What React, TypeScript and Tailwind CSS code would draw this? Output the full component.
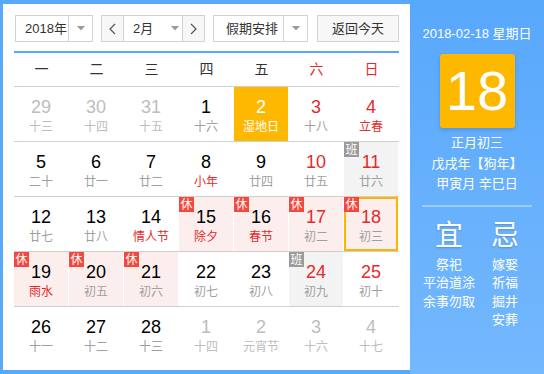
import React from "react";

type Cell = {
  d: number;
  l: string;
  other?: boolean;
  redNum?: boolean;
  redLunar?: boolean;
  badge?: "休" | "班";
  hl?: boolean;
  sel?: boolean;
};

const rows: Cell[][] = [
  [
    { d: 29, l: "十三", other: true },
    { d: 30, l: "十四", other: true },
    { d: 31, l: "十五", other: true },
    { d: 1, l: "十六" },
    { d: 2, l: "湿地日", hl: true },
    { d: 3, l: "十八", redNum: true },
    { d: 4, l: "立春", redNum: true, redLunar: true },
  ],
  [
    { d: 5, l: "二十" },
    { d: 6, l: "廿一" },
    { d: 7, l: "廿二" },
    { d: 8, l: "小年", redLunar: true },
    { d: 9, l: "廿四" },
    { d: 10, l: "廿五", redNum: true },
    { d: 11, l: "廿六", redNum: true, badge: "班" },
  ],
  [
    { d: 12, l: "廿七" },
    { d: 13, l: "廿八" },
    { d: 14, l: "情人节", redLunar: true },
    { d: 15, l: "除夕", redLunar: true, badge: "休" },
    { d: 16, l: "春节", redLunar: true, badge: "休" },
    { d: 17, l: "初二", redNum: true, badge: "休" },
    { d: 18, l: "初三", redNum: true, badge: "休", sel: true },
  ],
  [
    { d: 19, l: "雨水", redLunar: true, badge: "休" },
    { d: 20, l: "初五", badge: "休" },
    { d: 21, l: "初六", badge: "休" },
    { d: 22, l: "初七" },
    { d: 23, l: "初八" },
    { d: 24, l: "初九", redNum: true, badge: "班" },
    { d: 25, l: "初十", redNum: true },
  ],
  [
    { d: 26, l: "十一" },
    { d: 27, l: "十二" },
    { d: 28, l: "十三" },
    { d: 1, l: "十四", other: true },
    { d: 2, l: "元宵节", other: true },
    { d: 3, l: "十六", other: true },
    { d: 4, l: "十七", other: true },
  ],
];

const font = { fontFamily: '"Liberation Sans", Arial, "Noto Sans CJK SC", sans-serif' };

function Tri() {
  return (
    <svg width="8" height="5" viewBox="0 0 8 5">
      <path d="M0 0 L8 0 L4 4.5 Z" fill="#9a9a9a" />
    </svg>
  );
}

function Chev({ dir }: { dir: "l" | "r" }) {
  return (
    <svg width="7" height="12" viewBox="0 0 7 12">
      <path
        d={dir === "l" ? "M6 1 L1 6 L6 11" : "M1 1 L6 6 L1 11"}
        fill="none"
        stroke="#555"
        strokeWidth="1.2"
      />
    </svg>
  );
}

function DayCell({ c }: { c: Cell }) {
  let bg = "bg-white";
  if (c.hl) bg = "bg-[#ffb800]";
  else if (c.badge === "休") bg = "bg-[#fdeeee]";
  else if (c.badge === "班") bg = "bg-[#f3f3f3]";

  let numColor = "text-black";
  if (c.other) numColor = "text-[#bdbdbd]";
  else if (c.hl) numColor = "text-white";
  else if (c.redNum) numColor = "text-[#e22b2b]";

  let lunColor = "text-[#a0a0a0]";
  if (c.other) lunColor = "text-[#bdbdbd]";
  else if (c.hl) lunColor = "text-white";
  else if (c.redLunar) lunColor = "text-[#e22b2b]";

  return (
    <div className="w-[55px] h-[54px] pr-[1px]">
      <div
        className={`relative w-[54px] h-[54px] ${bg} ${
          c.sel ? "border-2 border-[#ffb400]" : ""
        } flex flex-col items-center`}
      >
        {c.badge && (
          <div
            className={`absolute ${c.sel ? "-left-[2px] -top-[2px]" : "left-0 top-0"} w-[15px] h-[15px] flex items-center justify-center text-[12px] leading-none text-white ${
              c.badge === "休" ? "bg-[#f5473e]" : "bg-[#9b9b9b]"
            }`}
          >
            {c.badge}
          </div>
        )}
        <div
          className={`${c.sel ? "mt-[8px]" : "mt-[10px]"} h-[20px] text-[18px] leading-[20px] ${numColor}`}
        >
          {c.d}
        </div>
        <div className={`mt-[2px] h-[16px] text-[12px] leading-[16px] ${lunColor}`}>{c.l}</div>
      </div>
    </div>
  );
}

export default function App() {
  const weekdays = ["一", "二", "三", "四", "五", "六", "日"];
  return (
    <div style={font} className="w-[544px] h-[374px] bg-[#58a8fc] pt-[4px] pb-[4px] pl-[3px] flex">
      <div className="w-[407px] h-[366px] bg-white pl-[11px] pt-[11px]">
        {/* toolbar */}
        <div className="flex items-center h-[27px] ml-[1px] text-[13px] text-[#333]">
          <div className="flex h-[27px] w-[78px] border border-[#d2d2d2] bg-white">
            <div className="flex-1 flex items-center pl-[9px]">2018年</div>
            <div className="w-[24px] border-l border-[#d2d2d2] flex items-center justify-center">
              <Tri />
            </div>
          </div>
          <div className="ml-[8px] flex h-[27px] w-[104px] border border-[#d2d2d2]">
            <div className="w-[22px] bg-[#f7f7f7] border-r border-[#d2d2d2] flex items-center justify-center">
              <Chev dir="l" />
            </div>
            <div className="flex-1 flex items-center pl-[9px] bg-white">
              <span>2月</span>
              <span className="ml-[18px]">
                <Tri />
              </span>
            </div>
            <div className="w-[22px] bg-[#f7f7f7] border-l border-[#d2d2d2] flex items-center justify-center">
              <Chev dir="r" />
            </div>
          </div>
          <div className="ml-[8px] flex h-[27px] w-[95px] border border-[#d2d2d2] bg-white">
            <div className="flex-1 flex items-center pl-[12px]">假期安排</div>
            <div className="w-[24px] border-l border-[#d2d2d2] flex items-center justify-center">
              <Tri />
            </div>
          </div>
          <div className="ml-[9px] h-[27px] w-[82px] border border-[#d2d2d2] bg-[#f7f7f7] flex items-center justify-center">
            返回今天
          </div>
        </div>
        <div className="mt-[9px] w-[385px] h-[2px] bg-[#58a8fc]" />
        {/* weekdays */}
        <div className="flex w-[385px] h-[33px] items-center text-[14px]">
          {weekdays.map((w, i) => (
            <div
              key={w}
              className={`w-[55px] text-center ${i >= 5 ? "text-[#e22b2b]" : "text-[#333]"}`}
            >
              {w}
            </div>
          ))}
        </div>
        {rows.map((r, ri) => (
          <div key={ri} className="flex w-[385px] border-t border-[#cfcfcf]">
            {r.map((c, ci) => (
              <DayCell key={ci} c={c} />
            ))}
          </div>
        ))}
      </div>
      {/* right panel */}
      <div className="flex-1 h-[370px] -mb-[4px] bg-gradient-to-b from-[#58a8fc] to-[#74b8fd] flex flex-col items-center text-white">
        <div className="mt-[21px] text-[13px] leading-[18px]">2018-02-18 星期日</div>
        <div className="mt-[11px] w-[75px] h-[74px] rounded-[3px] bg-[#ffb800] shadow-[0_2px_4px_rgba(0,0,0,0.15)] flex items-center justify-center text-[56px] leading-none text-white">
          18
        </div>
        <div className="mt-[5px] text-[13px] leading-[20.5px] text-center">
          <div>正月初三</div>
          <div>戊戌年【狗年】</div>
          <div>甲寅月 辛巳日</div>
        </div>
        <div className="mt-[10px] w-[110px] h-[2px] bg-[#9ccbfe]" />
        <div className="mt-[11px] flex w-[112px] justify-between text-[13px]">
          <div className="flex flex-col items-center w-[56px]">
            <div className="text-[28px] leading-[36px] [text-shadow:0_1px_2px_rgba(0,0,0,0.2)]">宜</div>
            <div className="mt-[2px] leading-[18.5px] text-center">
              <div>祭祀</div>
              <div>平治道涂</div>
              <div>余事勿取</div>
            </div>
          </div>
          <div className="flex flex-col items-center w-[56px]">
            <div className="text-[28px] leading-[36px] [text-shadow:0_1px_2px_rgba(0,0,0,0.2)]">忌</div>
            <div className="mt-[2px] leading-[18.5px] text-left">
              <div>嫁娶</div>
              <div>祈福</div>
              <div>掘井</div>
              <div>安葬</div>
            </div>
          </div>
        </div>
      </div>
    </div>
  );
}
